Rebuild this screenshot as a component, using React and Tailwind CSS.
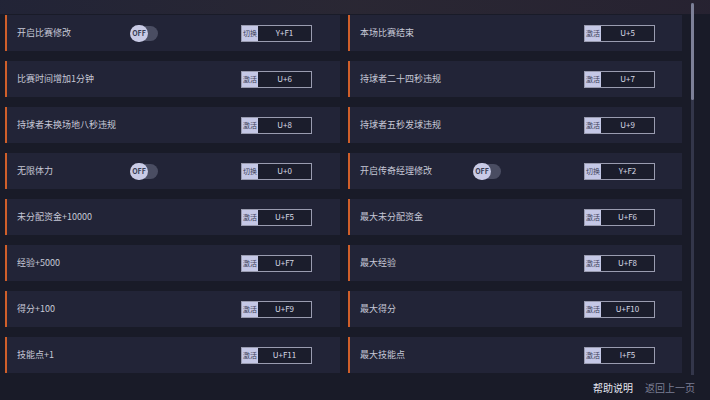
const rows = [
  [
    { name: '开启比赛修改', toggle: true, action: '切换', key: 'Y+F1' },
    { name: '本场比赛结束', action: '激活', key: 'U+5' },
  ],
  [
    { name: '比赛时间增加1分钟', action: '激活', key: 'U+6' },
    { name: '持球者二十四秒违规', action: '激活', key: 'U+7' },
  ],
  [
    { name: '持球者未换场地八秒违规', action: '激活', key: 'U+8' },
    { name: '持球者五秒发球违规', action: '激活', key: 'U+9' },
  ],
  [
    { name: '无限体力', toggle: true, action: '切换', key: 'U+0' },
    { name: '开启传奇经理修改', toggle: true, action: '切换', key: 'Y+F2' },
  ],
  [
    { name: '未分配资金+10000', action: '激活', key: 'U+F5' },
    { name: '最大未分配资金', action: '激活', key: 'U+F6' },
  ],
  [
    { name: '经验+5000', action: '激活', key: 'U+F7' },
    { name: '最大经验', action: '激活', key: 'U+F8' },
  ],
  [
    { name: '得分+100', action: '激活', key: 'U+F9' },
    { name: '最大得分', action: '激活', key: 'U+F10' },
  ],
  [
    { name: '技能点+1', action: '激活', key: 'U+F11' },
    { name: '最大技能点', action: '激活', key: 'I+F5' },
  ],
];

const Toggle = () => (
  <div className="relative h-[17px] w-[28px]">
    <div className="absolute left-[6px] top-[1px] h-[15px] w-[22px] rounded-full bg-[#4a4d62]" />
    <div className="absolute left-0 top-0 flex h-[17px] w-[18px] items-center justify-center rounded-full bg-[#c9cbe6] text-[7px] font-bold text-[#3a3d55]">
      OFF
    </div>
  </div>
);

const Cheat = ({ item }) => (
  <div className="flex h-[36px] items-center bg-[#222437]">
    <div className="h-full w-[2px] bg-[#d05f2a]" />
    <div className="w-[123px] pl-[10px] text-[9px] text-[#c6c8d6]">{item.name}</div>
    <div className="w-[111px]">{item.toggle && <Toggle />}</div>
    <div className="flex h-[17px] items-stretch border border-[#9a9cb0]">
      <span className="flex w-[16px] items-center justify-center bg-[#c5c8e6] text-[7px] text-[#3b3e58]">
        {item.action}
      </span>
      <span className="flex w-[53px] items-center justify-center bg-[#1b1d2c] text-[8px] text-[#d8dae6]">
        {item.key}
      </span>
    </div>
  </div>
);

export default function App() {
  return (
    <div
      className="relative h-[400px] w-[710px] overflow-hidden bg-[#191b28]"
      style={{ fontFamily: '"Noto Sans CJK SC", "Noto Sans", sans-serif' }}
    >
      <div className="absolute inset-x-0 top-0 h-[14px] bg-gradient-to-r from-[#24263a] via-[#2e2a36] to-[#2a2433] opacity-80" />
      <div className="relative flex">
        <div className="w-[686px] pl-[5px] pt-[15px]">
          <div className="grid grid-cols-[335px_334px] gap-x-[8px] gap-y-[10px]">
            {rows.flatMap((pair, i) =>
              pair.map((item, j) => <Cheat key={`${i}-${j}`} item={item} />)
            )}
          </div>
          <div className="mr-[-9px] mt-[7px] flex justify-end gap-[12px] text-[10px]">
            <span className="text-[#e4e6f0]">帮助说明</span>
            <span className="text-[#7c7f94]">返回上一页</span>
          </div>
        </div>
        <div className="ml-[5px] mt-[3px] flex h-[372px] w-[3px] flex-col bg-[#33364a]">
          <div className="h-[97px] w-full rounded-sm bg-[#7d8098]" />
        </div>
      </div>
    </div>
  );
}
